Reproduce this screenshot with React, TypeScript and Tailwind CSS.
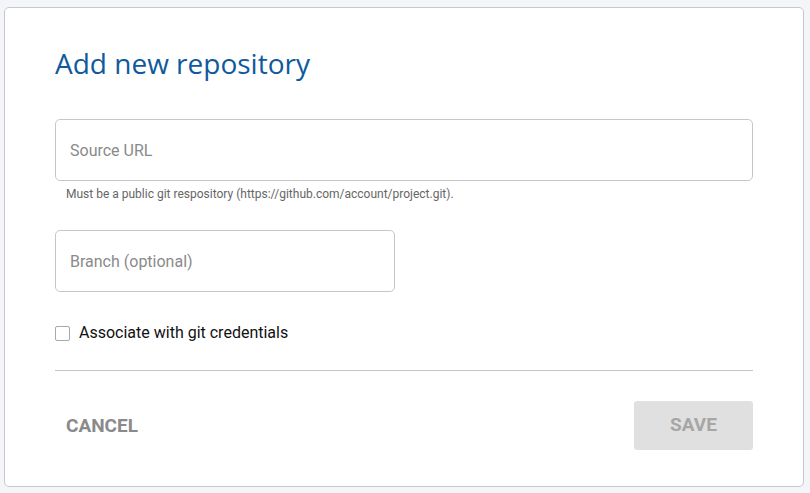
import React from 'react';

export default function App() {
  return (
    <div className="min-h-screen w-full bg-[#f4f5f9] p-[4px] pt-[7px]" style={{ fontFamily: 'Roboto, sans-serif' }}>
      <div className="w-[800px] h-[480px] bg-white border border-[#c8c8cc] rounded-[5px] px-[50px] pt-[37px]">
        <h1 className="text-[28px] leading-[36px] text-[#0f5a9c] font-normal" style={{ fontFamily: '"Open Sans", sans-serif' }}>
          Add new repository
        </h1>

        <div className="mt-[38px]">
          <input
            type="text"
            placeholder="Source URL"
            className="w-full h-[62px] border border-[#c6c6c6] rounded-[5px] px-[14px] text-[16px] text-[#333] placeholder:text-[#8a8a8a] outline-none"
          />
          <p className="mt-[5px] pl-[11px] text-[12px] leading-[16px] text-[#666]">
            Must be a public git respository (https://github.com/account/project.git).
          </p>
        </div>

        <div className="mt-[28px]">
          <input
            type="text"
            placeholder="Branch (optional)"
            className="w-[340px] h-[62px] border border-[#c6c6c6] rounded-[5px] px-[14px] text-[16px] text-[#333] placeholder:text-[#8a8a8a] outline-none"
          />
        </div>

        <label className="mt-[29px] flex items-center gap-[9px] text-[16px] leading-[24px] text-[#111]">
          <span className="w-[15px] h-[15px] border border-[#a8a8a8] rounded-[2px] bg-white" />
          Associate with git credentials
        </label>

        <div className="mt-[25px] border-t border-[#c4c4c4]" />

        <div className="mt-[30px] flex items-center justify-between">
          <button className="pl-[11px] pt-[2px] text-[19px] font-bold text-[#8a8a8a]">CANCEL</button>
          <button className="w-[119px] h-[49px] rounded-[3px] bg-[#e0e0e0] text-[19px] font-bold text-[#a6a6a6]">
            SAVE
          </button>
        </div>
      </div>
    </div>
  );
}
